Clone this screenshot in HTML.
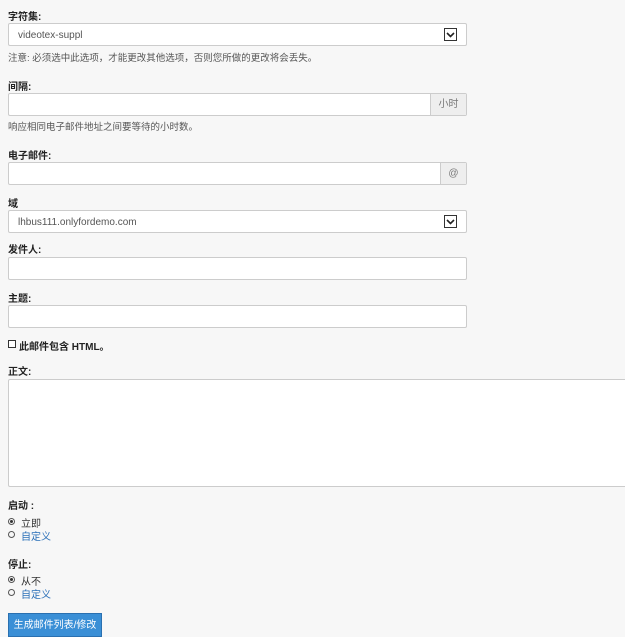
<!DOCTYPE html><html><head><meta charset="utf-8"><style>
body{margin:0;width:625px;height:637px;background:#f7f7f7;font-family:"Liberation Sans","Noto Sans CJK SC",sans-serif;font-size:10px;color:#333;position:relative;overflow:hidden}
div,span{position:absolute;box-sizing:border-box}
.l{left:8px;font-weight:bold;color:#222}
.h{left:8px;color:#555;font-size:9.5px}
.b{left:8px;width:459px;height:23px;background:#fff;border:1px solid #ccc;border-radius:2px}
.ad{background:#eee;border-left:1px solid #ccc;top:0;bottom:0;right:0;color:#777;text-align:center;line-height:21px}
.r{left:8px;width:7px;height:7px;border:1px solid #555;border-radius:50%}
.r.on::after{content:"";position:absolute;left:1px;top:1px;width:3px;height:3px;border-radius:50%;background:#333}
.t{left:21px}
.blue{color:#2a6fb8}
.sel{right:9px;top:4px;width:13px;height:13px;border:1px solid #333;background:#fff}
</style></head><body>
<div class="l" style="top:8px">字符集:</div>
<div class="b" style="top:23px"><span style="left:9px;top:6px;color:#555">videotex-suppl</span><span class="sel"><svg width="11" height="11" style="position:absolute;left:0;top:0"><path d="M2 4 L5.5 7.5 L9 4" stroke="#222" stroke-width="1.6" fill="none"/></svg></span></div>
<div class="h" style="top:50px">注意: 必须选中此选项，才能更改其他选项，否则您所做的更改将会丢失。</div>
<div class="l" style="top:78px">间隔:</div>
<div class="b" style="top:93px"><span class="ad" style="width:36px">小时</span></div>
<div class="h" style="top:119px">响应相同电子邮件地址之间要等待的小时数。</div>
<div class="l" style="top:147px">电子邮件:</div>
<div class="b" style="top:162px"><span class="ad" style="width:26px">@</span></div>
<div class="l" style="top:195px">域</div>
<div class="b" style="top:210px"><span style="left:9px;top:6px;color:#555">lhbus111.onlyfordemo.com</span><span class="sel"><svg width="11" height="11" style="position:absolute;left:0;top:0"><path d="M2 4 L5.5 7.5 L9 4" stroke="#222" stroke-width="1.6" fill="none"/></svg></span></div>
<div class="l" style="top:241px">发件人:</div>
<div class="b" style="top:257px"></div>
<div class="l" style="top:290px">主题:</div>
<div class="b" style="top:305px"></div>
<div style="left:8px;top:340px;width:8px;height:8px;border:1px solid #333;background:#fff"></div>
<div class="l" style="top:338px;left:19px">此邮件包含 HTML。</div>
<div class="l" style="top:363px">正文:</div>
<div style="left:8px;top:379px;width:630px;height:108px;background:#fff;border:1px solid #ccc;border-radius:2px"></div>
<div class="l" style="top:497px">启动 :</div>
<div class="r on" style="top:518px"></div><div class="t" style="top:515px">立即</div>
<div class="r" style="top:531px"></div><div class="t blue" style="top:528px">自定义</div>
<div class="l" style="top:556px">停止:</div>
<div class="r on" style="top:576px"></div><div class="t" style="top:573px">从不</div>
<div class="r" style="top:589px"></div><div class="t blue" style="top:586px">自定义</div>
<div style="left:8px;top:613px;width:94px;height:24px;background:#3a8fd6;border:1px solid #2a70b0;color:#fff;text-align:center;line-height:23px">生成邮件列表/修改</div>
</body></html>
